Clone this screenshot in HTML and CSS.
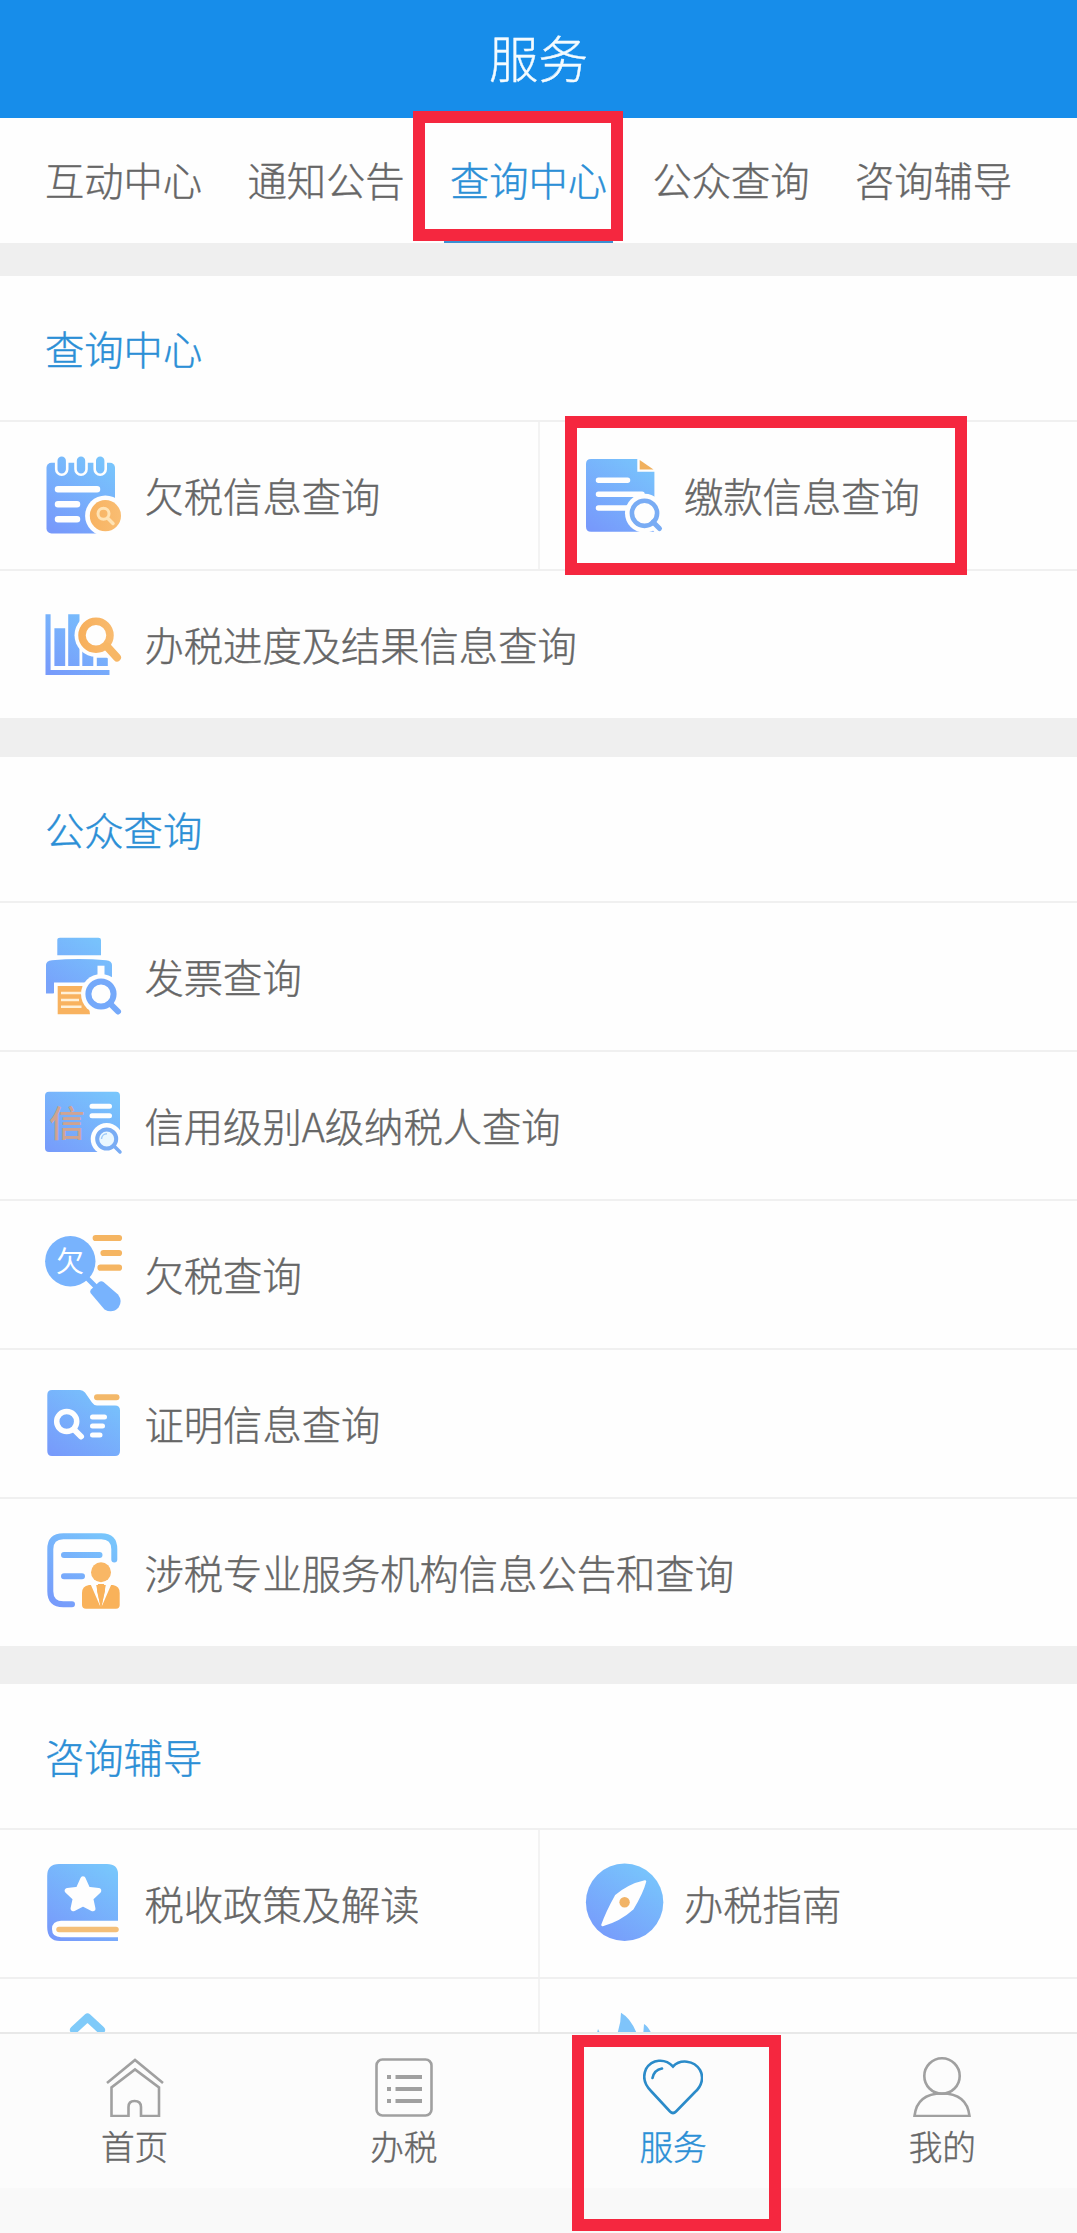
FILE: index.html
```html
<!DOCTYPE html>
<html lang="zh-CN">
<head>
<meta charset="utf-8">
<title>服务</title>
<link rel="stylesheet" href="styles.css">
</head>
<body>
<svg class="defs" width="0" height="0" aria-hidden="true">
  <defs>
    <linearGradient id="blue" gradientUnits="userSpaceOnUse" x1="64" y1="4" x2="14" y2="80">
      <stop offset="0" stop-color="#78c6fc"/><stop offset="1" stop-color="#7799fb"/>
    </linearGradient>
    <linearGradient id="orange" gradientUnits="userSpaceOnUse" x1="14" y1="0" x2="76" y2="0">
      <stop offset="0" stop-color="#f6a850"/><stop offset="1" stop-color="#f9bd72"/>
    </linearGradient>
  </defs>
</svg>
<div class="app">
  <header class="header"><h1>服务</h1></header>
  <nav class="tabs">
    <a class="tab">互动中心</a>
    <a class="tab">通知公告</a>
    <a class="tab active">查询中心</a>
    <a class="tab">公众查询</a>
    <a class="tab">咨询辅导</a>
  </nav>
  <main class="content">
    <section class="section">
      <h2>查询中心</h2>
      <div class="row">
        <a class="item">
          <svg class="icon" viewBox="0 0 80 83">
            <rect x="2.5" y="8.7" width="68.5" height="70.8" rx="5" fill="url(#blue)"/>
            <g fill="url(#blue)" stroke="#fefefe" stroke-width="2.600">
              <rect x="12.2" y="1.2" width="11" height="19.500" rx="5.500"/><rect x="31.500" y="1.2" width="11" height="19.500" rx="5.500"/><rect x="50.700" y="1.2" width="11" height="19.500" rx="5.500"/>
            </g>
            <path d="M14 35.300H53M14 50.300H33M14 65.300H33" stroke="#fefefe" stroke-width="6.500" stroke-linecap="round"/>
            <circle cx="61.400" cy="61.700" r="20.300" fill="#fefefe"/><circle cx="61.400" cy="61.700" r="15.600" fill="url(#orange)"/>
            <circle cx="59.500" cy="59.800" r="5.500" fill="none" stroke="#ffe3b4" stroke-width="3"/><path d="M63.500 64L69 69.500" stroke="#ffe3b4" stroke-width="3.500" stroke-linecap="round"/>
          </svg>
          <span>欠税信息查询</span>
        </a>
        <a class="item">
          <svg class="icon" viewBox="0 0 80 83">
            <path d="M7 5H53.300V17.700H70.400V77.700H7Q2 77.700 2 72.700V10Q2 5 7 5Z" fill="url(#blue)"/>
            <path d="M55.700 6L69.500 15.500H55.700Z" fill="#f0b05e"/>
            <path d="M14.500 26.300H43.500M14.500 40.300H58M14.500 54H44" stroke="#fefefe" stroke-width="5.500" stroke-linecap="round"/>
            <circle cx="60.500" cy="59.300" r="19.500" fill="#fefefe"/><path d="M66 65L80 79" stroke="#fefefe" stroke-width="12"/>
            <circle cx="60.500" cy="59.300" r="12.600" fill="none" stroke="#79acf4" stroke-width="4.600"/><path d="M69 68L75.500 74.500" stroke="#79acf4" stroke-width="5" stroke-linecap="round"/>
          </svg>
          <span>缴款信息查询</span>
        </a>
      </div>
      <div class="row">
        <a class="item">
          <svg class="icon" viewBox="0 0 80 83">
            <path d="M1.500 11.300H6.600V67H65.500V72H1.500ZM10.400 25.300H21.200V63H10.400ZM24.200 11.300H35.500V63H24.200ZM38.300 45H49.300V63H38.300ZM52.800 54.700H63.800V63H52.800Z" fill="url(#blue)"/>
            <circle cx="52" cy="32.300" r="21.500" fill="#fefefe"/><path d="M63 44L73 55" stroke="#fefefe" stroke-width="14" stroke-linecap="round"/>
            <circle cx="52" cy="32.300" r="14" fill="none" stroke="url(#orange)" stroke-width="7.500"/><path d="M63 43.500L73 54.500" stroke="#f7b766" stroke-width="8" stroke-linecap="round"/>
          </svg>
          <span>办税进度及结果信息查询</span>
        </a>
      </div>
    </section>
    <section class="section">
      <h2>公众查询</h2>
      <div class="row">
        <a class="item">
          <svg class="icon" viewBox="0 0 80 83">
            <path d="M13.300 20.300V5Q13.300 2.700 16 2.700H54.500Q57 2.700 57 5V20.300ZM2 58.300V30Q2 26 8 25.200Q35 23 62 25.200Q68 26 68 30V54H11V58.300Z" fill="url(#blue)"/>
            <path d="M9 47.500H48V82H9Z" fill="#fefefe"/><path d="M2 47H10V58.300H2Z" fill="#79a3fa"/><path d="M13.700 51H42L46 79.300H13.700Z" fill="#f8b25f"/>
            <path d="M17 58H37.500M17 65H35M17 71.700H37.500" stroke="#fff0d7" stroke-width="2.600"/>
            <path d="M53.500 30.700H60.500V42H53.500Z" fill="#fefefe"/><circle cx="57" cy="59" r="20" fill="#fefefe"/><path d="M66 68L78 80" stroke="#fefefe" stroke-width="11"/>
            <circle cx="57" cy="59" r="12.600" fill="none" stroke="#75a9fa" stroke-width="6"/><path d="M66 68.500L74 76.500" stroke="#75a9fa" stroke-width="6" stroke-linecap="round"/>
          </svg>
          <span>发票查询</span>
        </a>
      </div>
      <div class="row">
        <a class="item">
          <svg class="icon" viewBox="0 0 80 83">
            <rect x="1" y="7.700" width="75" height="60.300" rx="4" fill="url(#blue)"/>
            <text class="glyph glyph-bold" x="5" y="53" font-size="36" fill="#cfa391">信</text>
            <path d="M48 22.300H65.500M48 31.700H65.500" stroke="#fefefe" stroke-width="5" stroke-linecap="round"/>
            <circle cx="62.700" cy="55" r="16" fill="#fefefe"/><path d="M69 62L79 72" stroke="#fefefe" stroke-width="9"/>
            <circle cx="62.700" cy="55" r="9.500" fill="#eaf7ff" stroke="#79acf4" stroke-width="4"/><path d="M57.500 55A5.500 5.500 0 0 1 63 49.800" fill="none" stroke="#9cc9fa" stroke-width="1.500"/><path d="M70 62L76 68" stroke="#79acf4" stroke-width="3.500" stroke-linecap="round"/>
          </svg>
          <span>信用级别A级纳税人查询</span>
        </a>
      </div>
      <div class="row">
        <a class="item">
          <svg class="icon" viewBox="0 0 80 83">
            <circle cx="26.300" cy="28.300" r="25.200" fill="#78b3fd"/>
            <text class="glyph" x="12" y="39" font-size="28" fill="#fff">欠</text>
            <path d="M42 44L52 54" stroke="#78b3fd" stroke-width="5"/>
            <path d="M46.500 60Q45.500 58 47 56.500L54.500 49.500Q57 47.500 59.500 49L74 61.500Q79 68 74.500 74.500Q68.500 81 60.500 76.500Z" fill="#78b3fd"/>
            <path d="M51.700 5H75M59.500 20H75M56.500 34.700H75" stroke="#f5b562" stroke-width="6.200" stroke-linecap="round"/>
          </svg>
          <span>欠税查询</span>
        </a>
      </div>
      <div class="row">
        <a class="item">
          <svg class="icon" viewBox="0 0 80 83">
            <path d="M8 8H36Q39 8 41 10.500L48 20.500Q50 23.500 53 23.500H71Q76 23.500 76 28.500V69Q76 74 71 74H8Q3.300 74 3.300 69V13Q3.300 8 8 8Z" fill="url(#blue)"/>
            <path d="M53 15.300H72.500" stroke="#f3b869" stroke-width="6" stroke-linecap="round"/>
            <circle cx="22.700" cy="39.500" r="10" fill="none" stroke="#fefefe" stroke-width="5.500"/><path d="M30 47.500L37 54.500" stroke="#fefefe" stroke-width="6" stroke-linecap="round"/>
            <path d="M48.500 35H60.500M48.500 44H58.500M48.500 53H56" stroke="#fefefe" stroke-width="5" stroke-linecap="round"/>
          </svg>
          <span>证明信息查询</span>
        </a>
      </div>
      <div class="row">
        <a class="item">
          <svg class="icon" viewBox="0 0 80 83">
            <path d="M70.300 28.500V18.300Q70.300 5.300 57.300 5.300H19.300Q6.300 5.300 6.300 18.300V60.300Q6.300 73.300 19.300 73.300H28M20 24H55.500M20 45.300H38" fill="none" stroke="url(#blue)" stroke-width="6" stroke-linecap="round"/>
            <circle cx="57" cy="41.300" r="10" fill="#f9b765"/>
            <path d="M45 54H69Q75.700 55 75.700 62V74Q75.700 77.700 72 77.700H42Q38 77.700 38 74V62Q38 55 45 54Z" fill="#f9b25a"/>
            <path d="M46.500 53H52L56.500 76ZM62 53H67.500L57.500 76Z" fill="#fefefe"/><path d="M54 53H60L61 60L57 77L53 60Z" fill="#f9b25a"/>
          </svg>
          <span>涉税专业服务机构信息公告和查询</span>
        </a>
      </div>
    </section>
    <section class="section">
      <h2>咨询辅导</h2>
      <div class="row">
        <a class="item">
          <svg class="icon" viewBox="0 0 80 83">
            <path d="M15 2H63Q74 2 74 12V58.700H17Q8 59 8 67Q8 75 17 75.200H74V79H16Q3.200 79 3.200 65V14Q3.200 2 15 2Z" fill="url(#blue)"/>
            <path d="M15 67.500H72" stroke="#f4bf79" stroke-width="5.500" stroke-linecap="round"/>
            <path d="M39 17L43.700 27.500L54.500 28.700L46.500 36.300L48.700 46.500L39 41.500L29.300 46.500L31.500 36.300L23.500 28.700L34.300 27.500Z" fill="#fefefe" stroke="#fefefe" stroke-width="5.500" stroke-linejoin="round"/>
          </svg>
          <span>税收政策及解读</span>
        </a>
        <a class="item">
          <svg class="icon" viewBox="0 0 80 83">
            <circle cx="40.600" cy="40.300" r="38.700" fill="url(#blue)"/>
            <path d="M61 19.500Q58 31 48.500 46.500Q36 58 18.500 63Q23 50 32 34Q45 23 61 19.500Z" fill="#fefefe" stroke="#fefefe" stroke-width="2.500" stroke-linejoin="round"/>
            <circle cx="40.600" cy="40.300" r="5.200" fill="#f1b366"/>
          </svg>
          <span>办税指南</span>
        </a>
      </div>
      <div class="row">
        <a class="item">
          <svg class="icon" viewBox="0 0 80 83"><path d="M30 19L43.500 6.500L57 19" fill="none" stroke="#7fcaf9" stroke-width="8" stroke-linecap="round" stroke-linejoin="round"/></svg>
        </a>
        <a class="item">
          <svg class="icon" viewBox="0 0 80 83"><path d="M37 1.700Q48 8 54 26H32Q37 14 37 1.700ZM60 13Q65 16 69 26H59ZM14 18L18 26H12Z" fill="#7fc4fa"/></svg>
        </a>
      </div>
    </section>
  </main>
  <footer class="tabbar">
    <a class="nav">
      <svg class="nav-icon" viewBox="0 0 60 60"><path d="M2 26L30 3L58 26M6.500 59V30.500L30 12.500L54 30.500V59H36V50Q36 44 29.500 44Q23.500 44 23.500 50V59Z"/></svg>
      <span>首页</span>
    </a>
    <a class="nav">
      <svg class="nav-icon" viewBox="0 0 60 60"><rect x="2.500" y="2.500" width="55" height="56" rx="6"/><path d="M21.500 20H48M21.500 32H48M21.500 44H48M13 20H17M13 32H17M13 44H17" stroke-width="4"/></svg>
      <span>办税</span>
    </a>
    <a class="nav active">
      <svg class="nav-icon" viewBox="0 0 60 60"><path d="M30 9.500C22 1 9 2 3 12C-1 21 2 28 8 34L27 54.500Q30 57.500 33 54.500L52 35C59 29 61 20 57 13C51 3 37 2 30 9.500ZM9.500 21Q11 13 19 11.500"/></svg>
      <span>服务</span>
    </a>
    <a class="nav">
      <svg class="nav-icon" viewBox="0 0 60 60"><circle cx="30" cy="19" r="17.700"/><path d="M2.500 59Q5 36.500 30 36.500Q55 36.500 57.500 59Z"/></svg>
      <span>我的</span>
    </a>
  </footer>
  <div class="mark mark-tab"></div>
  <div class="mark mark-item"></div>
  <div class="mark mark-nav"></div>
</div>
</body>
</html>
```
FILE: styles.css
```css
* { box-sizing: border-box; }
body {
  margin: 0;
  font-family: "Noto Sans CJK SC", sans-serif;
  font-weight: 300;
  font-size: 39.3px;
  color: #666;
  background: #efefef;
  -webkit-text-stroke: 0.4px currentColor;
}
h1, h2 { margin: 0; font-weight: 300; }
.defs { position: absolute; }
.app {
  position: relative;
  display: flex;
  flex-direction: column;
  width: 1077px;
  height: 2233px;
  overflow: hidden;
}
.header {
  flex: none;
  height: 118px;
  display: flex;
  align-items: center;
  justify-content: center;
  padding-bottom: 4px;
  background: #178dea;
  color: #f4fbff;
}
.header h1 { font-size: 49.5px; line-height: 1; }
.tabs {
  flex: none;
  display: flex;
  gap: 33.5px;
  height: 125px;
  padding-left: 39px;
  background: #fefefe;
}
.tab {
  width: 169px;
  display: flex;
  align-items: center;
  justify-content: center;
  white-space: nowrap;
  border-bottom: 4px solid transparent;
}
.tab.active { color: #2b8fd6; border-color: #3b8fd3; }
.content {
  flex: 1;
  min-height: 0;
  overflow: hidden;
  padding-top: 33px;
  display: flex;
  flex-direction: column;
  gap: 38px;
}
.section { flex: none; background: #fefefe; }
.section:first-child { margin-bottom: 1px; }
.section h2 {
  height: 144px;
  padding: 0 0 2px 45px;
  display: flex;
  align-items: center;
  font-size: 39.3px;
  color: #2b8fd6;
}
.row {
  display: flex;
  height: 149px;
  border-top: 2px solid #f0f0f0;
}
.item {
  flex: 1;
  display: flex;
  align-items: center;
  gap: 20.5px;
  padding-left: 44px;
  white-space: nowrap;
}
.item span { padding-bottom: 3px; }
.item + .item { border-left: 2px solid #f3f3f3; }
.icon { flex: none; width: 80px; height: 83px; }
.glyph { font-weight: 400; -webkit-text-stroke: 0; }
.glyph-bold { font-weight: 500; }
.tabbar {
  flex: none;
  display: flex;
  height: 201px;
  padding-bottom: 45px;
  border-top: 2px solid #e8e8e8;
  background: linear-gradient(#fcfcfc 154px, #f9f9f9 154px);
}
.nav {
  flex: 1;
  display: flex;
  flex-direction: column;
  align-items: center;
  padding-top: 23px;
  gap: 11px;
  font-size: 33.7px;
  line-height: 36px;
}
.nav-icon {
  width: 60px;
  height: 60px;
  fill: none;
  stroke: #a0a0a0;
  stroke-width: 2.6;
}
.nav.active { color: #2b8fd6; }
.nav.active .nav-icon { stroke: #2b8bc9; stroke-linecap: round; }
.mark { position: absolute; border: 12.5px solid #f5273f; }
.mark-tab { left: 413px; top: 111px; width: 210px; height: 130px; }
.mark-item { left: 565px; top: 416px; width: 402px; height: 159px; }
.mark-nav { left: 572px; top: 2035px; width: 209px; height: 196px; }
```
